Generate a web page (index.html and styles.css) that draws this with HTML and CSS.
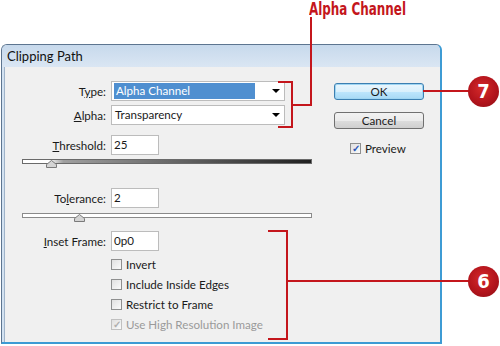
FILE: index.html
```html
<!DOCTYPE html>
<html lang="en">
<head>
  <meta charset="UTF-8">
  <title>Clipping Path</title>
  <link rel="stylesheet" href="styles.css">
</head>
<body>
  <div class="stage">
    <div class="window">
      <div class="titlebar">Clipping Path</div>
      <div class="pane">
        <div class="form">
          <div class="row">
            <span class="label">T<u>y</u>pe:</span>
            <div class="select selected"><span class="value">Alpha Channel</span><span class="arrow"></span></div>
          </div>
          <div class="row gap-s">
            <span class="label"><u>A</u>lpha:</span>
            <div class="select"><span class="value">Transparency</span><span class="arrow"></span></div>
          </div>
          <div class="row gap-m">
            <span class="label"><u>T</u>hreshold:</span>
            <div class="input">25</div>
          </div>
          <div class="slider dark">
            <svg class="thumb" style="left: 23px" width="11" height="8" viewBox="0 0 11 8"><polygon points="0.5,7.5 0.5,4.5 5.5,0.5 10.5,4.5 10.5,7.5" fill="#d4d4d4" stroke="#7a7a7a"/></svg>
          </div>
          <div class="row gap-l">
            <span class="label">To<u>l</u>erance:</span>
            <div class="input">2</div>
          </div>
          <div class="slider light">
            <svg class="thumb" style="left: 51px" width="11" height="8" viewBox="0 0 11 8"><polygon points="0.5,7.5 0.5,4.5 5.5,0.5 10.5,4.5 10.5,7.5" fill="#d4d4d4" stroke="#7a7a7a"/></svg>
          </div>
          <div class="row gap-inset">
            <span class="label"><u>I</u>nset Frame:</span>
            <div class="input">0p0</div>
          </div>
          <div class="checks">
            <label class="check"><span class="box"></span>Invert</label>
            <label class="check"><span class="box"></span>Include Inside Edges</label>
            <label class="check"><span class="box"></span>Restrict to Frame</label>
            <label class="check disabled"><span class="box on">&#10003;</span>Use High Resolution Image</label>
          </div>
        </div>
        <div class="side">
          <div class="button default">OK</div>
          <div class="button">Cancel</div>
          <label class="check preview"><span class="box on">&#10003;</span>Preview</label>
        </div>
      </div>
    </div>

    <!-- callouts -->
    <div class="callout-title">Alpha Channel</div>
    <div class="line" style="left: 310px; top: 17px; width: 2px; height: 89px"></div>
    <div class="line" style="left: 292px; top: 104px; width: 20px; height: 2px"></div>
    <div class="bracket" style="left: 278px; top: 81px; width: 15px; height: 47px"></div>
    <div class="line" style="left: 423px; top: 90px; width: 46px; height: 2px"></div>
    <div class="badge" style="left: 468px; top: 76px">7</div>

    <div class="bracket" style="left: 268px; top: 230px; width: 20px; height: 110px"></div>
    <div class="line" style="left: 288px; top: 280px; width: 181px; height: 2px"></div>
    <div class="badge" style="left: 468px; top: 266px">6</div>
  </div>
</body>
</html>
```

FILE: styles.css
```css
body, html {
  margin: 0;
  padding: 0;
  background: #fff;
}
.stage {
  position: relative;
  width: 500px;
  height: 346px;
  overflow: hidden;
  font-family: Lato, "Noto Sans", sans-serif;
  font-size: 11.6px;
  color: #1a1a1a;
}
.window {
  margin: 44px 0 0 1px;
  width: 438px;
  height: 297px;
  border: 1px solid #5d7590;
  border-right: 2px solid #3d9bd4;
  border-bottom: 2px solid #3d9bd4;
  border-radius: 6px 6px 0 0;
  background: #d3e2f1;
  display: flex;
  flex-direction: column;
}
.titlebar {
  height: 22px;
  line-height: 22px;
  padding-left: 5px;
  font-size: 13px;
  color: #111;
  background: linear-gradient(#c7d9ec, #dae6f3);
  border-radius: 5px 5px 0 0;
}
.pane {
  flex: 1;
  margin: 0 0 0 2px;
  border-left: 1px solid #9fb3c9;
  background: #f0f0f0;
  display: flex;
  padding: 14px 0 0 17px;
}
.form {
  width: 290px;
  display: flex;
  flex-direction: column;
}
.row {
  display: flex;
  align-items: center;
  height: 20px;
}
.gap-s { margin-top: 4px; }
.gap-m { margin-top: 10px; }
.gap-l { margin-top: 24px; }
.gap-inset { margin-top: 13px; }
.label {
  width: 84px;
  margin-right: 5px;
  text-align: right;
}
.select {
  width: 172px;
  height: 18px;
  border: 1px solid #bcbcbc;
  background: #fff;
  display: flex;
  align-items: center;
}
.select .value {
  flex: 1;
  padding-left: 3px;
  height: 16px;
  line-height: 16px;
}
.selected .value {
  margin: 0 17px 0 2px;
  padding-left: 2px;
  background: #4f8fd0;
  color: #fff;
}
.arrow {
  width: 0;
  height: 0;
  margin-right: 4px;
  border-left: 4px solid transparent;
  border-right: 4px solid transparent;
  border-top: 4px solid #000;
}
.select .arrow { margin-left: auto; }
.selected .arrow { margin-left: 0; }
.input {
  width: 44px;
  height: 18px;
  line-height: 18px;
  padding-left: 2px;
  border: 1px solid #bcbcbc;
  background: #fff;
}
.slider {
  position: relative;
  height: 3px;
  margin-top: 4px;
  border: 1px solid #6a6a6a;
}
.slider.dark {
  background: linear-gradient(to right, #fff 0%, #fff 9%, #a0a0a0 14%, #202020 100%);
}
.slider.light {
  margin-top: 5px;
  border-color: #8a8a8a;
  background: #fff;
}
.thumb {
  position: absolute;
  top: 0;
}
.checks {
  margin-top: 3px;
  padding-left: 89px;
  display: flex;
  flex-direction: column;
}
.check {
  display: flex;
  align-items: center;
  height: 20px;
}
.box {
  width: 9px;
  height: 9px;
  margin-right: 4px;
  border: 1px solid #8e8f8f;
  background: linear-gradient(135deg, #e0e0e0, #fafafa);
  font-size: 10px;
  line-height: 9px;
  text-align: center;
  color: #2a56b8;
  font-weight: bold;
}
.disabled { color: #9a9a9a; }
.disabled .box { color: #b0b0b0; border-color: #c0c0c0; }
.side {
  margin-left: 22px;
  padding-top: 2px;
  display: flex;
  flex-direction: column;
  width: 90px;
}
.button {
  height: 15px;
  line-height: 15px;
  text-align: center;
  border: 1px solid #707070;
  border-radius: 3px;
  background: linear-gradient(#f2f2f2 0%, #ebebeb 50%, #dddddd 51%, #cfcfcf 100%);
}
.button + .button { margin-top: 12px; }
.button.default {
  border-color: #3c7fb1;
  box-shadow: inset 0 0 0 1px #9fd5f2;
  background: linear-gradient(#eaf6fd 0%, #d9f0fc 50%, #bee6fd 51%, #a7d9f5 100%);
}
.preview {
  margin-top: 12px;
  height: 14px;
  padding-left: 16px;
}
.callout-title {
  position: absolute;
  left: 309px;
  top: -1px;
  font-family: "Liberation Sans Narrow", "DejaVu Sans Condensed", sans-serif;
  font-size: 17px;
  font-weight: bold;
  color: #c4161c;
  transform: scaleX(0.78);
  transform-origin: left top;
}
.line {
  position: absolute;
  background: #c4161c;
}
.bracket {
  position: absolute;
  box-sizing: border-box;
  border: 2px solid #c4161c;
  border-left: none;
}
.badge {
  position: absolute;
  width: 31px;
  height: 31px;
  line-height: 31px;
  border-radius: 50%;
  text-align: center;
  background: radial-gradient(circle at 45% 40%, #d42a2a 0%, #b3141c 55%, #8a0d14 100%);
  color: #fff;
  font-family: "Liberation Sans Narrow", "DejaVu Sans Condensed", sans-serif;
  font-weight: bold;
  font-size: 20px;
}
```
